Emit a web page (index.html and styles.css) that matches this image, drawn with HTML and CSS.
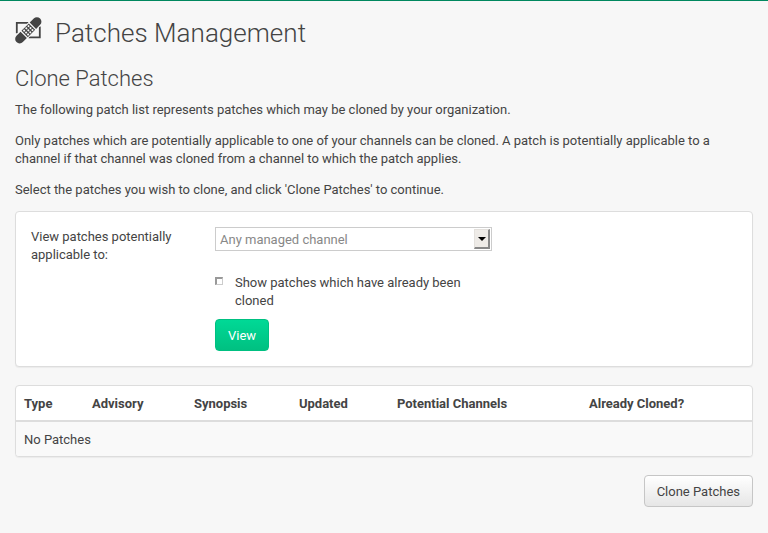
FILE: index.html
```html
<!DOCTYPE html>
<html lang="en">
<head>
<meta charset="utf-8">
<title>Patches Management</title>
<link rel="stylesheet" href="styles.css">
</head>
<body>
<main class="content">
  <h1 class="page-title">
    <svg class="patch-icon" viewBox="0 0 28 28" aria-hidden="true">
      <path d="M1.8 17.2V6.8H13.5M24.8 10.5V21.4H13.5" fill="none" stroke="#444" stroke-width="1.8"/>
      <g transform="translate(13.3 14.3) rotate(-45)">
        <rect x="-17" y="-5.5" width="34" height="11" rx="5.5" fill="#f7f7f7"/>
        <path d="M-6.5 -4.5H-12.2a4.5 4.5 0 0 0 0 9H-6.5ZM6.5 -4.5H12.2a4.5 4.5 0 0 1 0 9H6.5ZM-5.2 -4.5H5.2V4.5H-5.2Z" fill="#444"/>
        <g fill="#f7f7f7"><circle cx="-3.1" cy="-2.8" r="1.05"/><circle cx="0" cy="-2.8" r="1.05"/><circle cx="3.1" cy="-2.8" r="1.05"/><circle cx="-3.1" cy="0" r="1.05"/><circle cx="0" cy="0" r="1.05"/><circle cx="3.1" cy="0" r="1.05"/><circle cx="-3.1" cy="2.8" r="1.05"/><circle cx="0" cy="2.8" r="1.05"/><circle cx="3.1" cy="2.8" r="1.05"/></g>
      </g>
    </svg>
    <span>Patches Management</span>
  </h1>
  <h2 class="section-title">Clone Patches</h2>
  <p>The following patch list represents patches which may be cloned by your organization.</p>
  <p>Only patches which are potentially applicable to one of your channels can be cloned. A patch is potentially applicable to a channel if that channel was cloned from a channel to which the patch applies.</p>
  <p class="last">Select the patches you wish to clone, and click 'Clone Patches' to continue.</p>
  <form class="panel filter">
    <div class="label">View patches potentially applicable to:</div>
    <div class="controls">
      <div class="select"><span>Any managed channel</span><span class="drop"></span></div>
      <label class="check"><span class="box"></span><span>Show patches which have already been cloned</span></label>
      <button type="button" class="btn primary">View</button>
    </div>
  </form>
  <table class="panel list">
    <colgroup><col class="c1"><col class="c2"><col class="c3"><col class="c4"><col class="c5"><col></colgroup>
    <thead><tr><th>Type</th><th>Advisory</th><th>Synopsis</th><th>Updated</th><th>Potential Channels</th><th>Already Cloned?</th></tr></thead>
    <tbody><tr><td colspan="6">No Patches</td></tr></tbody>
  </table>
  <div class="actions"><button type="button" class="btn">Clone Patches</button></div>
</main>
</body>
</html>
```
FILE: styles.css
```css
* { box-sizing: border-box; }
body { margin: 0; height: 533px; overflow: hidden; background: #f7f7f7; border-top: 1px solid #00885f; color: #444; font: 13px/18px Roboto, sans-serif; letter-spacing: -0.01px; }
.content { padding: 15px 15px 0; }
.page-title { display: flex; align-items: center; gap: 12px; margin: 0; height: 34px; font-size: 26px; line-height: 34px; font-weight: 300; letter-spacing: .03px; }
.patch-icon { width: 28px; height: 28px; margin-top: -6px; overflow: visible; }
.section-title { margin: 16px 0 9px; font-size: 22px; line-height: 26px; font-weight: 300; }
p { margin: 0 0 13px; }
.last { margin-bottom: 12px; }
.panel { background: #fff; border: 1px solid #ddd; border-radius: 4px; box-shadow: 0 1px 1px rgba(0,0,0,.05); }
.filter { display: flex; height: 156px; padding: 15px; }
.label { width: 184px; padding: 1px 30px 0 0; }
.controls { width: 277px; }
.select { display: flex; justify-content: space-between; height: 24px; padding: 1px 1px 1px 4px; border: 1px solid #ccc; color: #888; line-height: 22px; }
.drop { position: relative; width: 16px; height: 20px; background: #eeebe7; border: solid; border-width: 1px 2px 2px 1px; border-color: #e4e1dd #888 #888 #e4e1dd; }
.drop::after { content: ""; position: absolute; left: 3px; top: 7px; border: 4px solid transparent; border-top-color: #000; border-bottom: 0; }
.check { display: flex; gap: 12px; margin: 23px 0 9px; }
.box { flex: none; width: 8px; height: 8px; margin-top: 3px; border: solid; border-width: 2px 1px 1px 2px; border-color: #999 #ccc #ccc #999; background: #fff; }
.btn { display: block; height: 32px; padding: 1px 12px 0; border: 1px solid #c6c6c6; border-radius: 4px; background: linear-gradient(#fff, #e6e6e6); color: #444; font: inherit; }
.primary { color: #fff; border-color: #00c081; background: linear-gradient(#00d996, #00c081); }
.list { width: 100%; margin-top: 18px; height: 72px; border-collapse: separate; border-spacing: 0; table-layout: fixed; overflow: hidden; }
.c1 { width: 68px; } .c2 { width: 102px; } .c3 { width: 105px; } .c4 { width: 98px; } .c5 { width: 192px; }
th, td { padding: 2px 8px 0; text-align: left; }
th { height: 36px; border-bottom: 2px solid #ddd; font-weight: 700; }
td { height: 34px; background: #f9f9f9; }
.actions { display: flex; justify-content: flex-end; margin-top: 18px; }
```
